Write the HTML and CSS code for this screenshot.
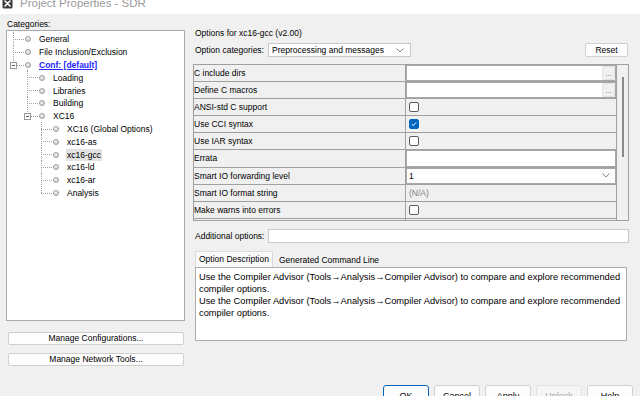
FILE: index.html
```html
<!DOCTYPE html>
<html lang="en">
  <head>
    <meta charset="UTF-8" />
    <title>Project Properties - SDR</title>
    <link rel="stylesheet" href="styles.css">
  </head>
  <body>
    <div class="titlebar">
      <svg class="app-icon" width="11" height="11" viewBox="0 0 11 11">
        <rect x="0.5" y="0.5" width="10" height="10" rx="1.5" fill="#3c3c3c" />
        <path d="M3 3L8 8M8 3L3 8" stroke="#ffffff" stroke-width="1.6" stroke-linecap="round" />
      </svg>
      <span class="title-text">Project Properties - SDR</span>
    </div>

    <div class="main">
      <div class="side">
        <div class="side-label">Categories:</div>
        <div class="tree-box">
          <ul class="tree">
            <li><div class="row"><span class="dot"></span><span class="label">General</span></div></li>
            <li><div class="row"><span class="dot"></span><span class="label">File Inclusion/Exclusion</span></div></li>
            <li class="open">
              <span class="toggle"></span>
              <div class="row"><span class="dot"></span><span class="label conf">Conf: [default]</span></div>
              <ul>
                <li><div class="row"><span class="dot"></span><span class="label">Loading</span></div></li>
                <li><div class="row"><span class="dot"></span><span class="label">Libraries</span></div></li>
                <li><div class="row"><span class="dot"></span><span class="label">Building</span></div></li>
                <li class="open">
                  <span class="toggle"></span>
                  <div class="row"><span class="dot"></span><span class="label">XC16</span></div>
                  <ul>
                    <li><div class="row"><span class="dot"></span><span class="label">XC16 (Global Options)</span></div></li>
                    <li><div class="row"><span class="dot"></span><span class="label">xc16-as</span></div></li>
                    <li><div class="row"><span class="dot"></span><span class="label selected">xc16-gcc</span></div></li>
                    <li><div class="row"><span class="dot"></span><span class="label">xc16-ld</span></div></li>
                    <li><div class="row"><span class="dot"></span><span class="label">xc16-ar</span></div></li>
                    <li><div class="row"><span class="dot"></span><span class="label">Analysis</span></div></li>
                  </ul>
                </li>
              </ul>
            </li>
          </ul>
        </div>
        <button class="btn wide">Manage Configurations...</button>
        <button class="btn wide">Manage Network Tools...</button>
      </div>

      <div class="panel">
        <div class="options-title">Options for xc16-gcc (v2.00)</div>
        <div class="cat-row">
          <span class="cat-label">Option categories:</span>
          <div class="select">
            <span>Preprocessing and messages</span>
            <svg width="8" height="5" viewBox="0 0 8 5"><path d="M0.5 0.5L4 4L7.5 0.5" fill="none" stroke="#888" stroke-width="1" /></svg>
          </div>
          <button class="btn reset">Reset</button>
        </div>

        <div class="props">
          <div class="props-grid">
            <div class="prop">
              <div class="prop-name">C include dirs</div>
              <div class="prop-value field"><span class="more">...</span></div>
            </div>
            <div class="prop">
              <div class="prop-name">Define C macros</div>
              <div class="prop-value field"><span class="more">...</span></div>
            </div>
            <div class="prop">
              <div class="prop-name">ANSI-std C support</div>
              <div class="prop-value"><span class="check"></span></div>
            </div>
            <div class="prop">
              <div class="prop-name">Use CCI syntax</div>
              <div class="prop-value">
                <span class="check checked">
                  <svg width="8" height="8" viewBox="0 0 8 8"><path d="M1.8 4.2L3.3 5.6L6.2 2.4" fill="none" stroke="#fff" stroke-width="1" /></svg>
                </span>
              </div>
            </div>
            <div class="prop">
              <div class="prop-name">Use IAR syntax</div>
              <div class="prop-value"><span class="check"></span></div>
            </div>
            <div class="prop">
              <div class="prop-name">Errata</div>
              <div class="prop-value field"></div>
            </div>
            <div class="prop">
              <div class="prop-name">Smart IO forwarding level</div>
              <div class="prop-value field combo">
                <span>1</span>
                <svg width="8" height="5" viewBox="0 0 8 5"><path d="M0.5 0.5L4 4L7.5 0.5" fill="none" stroke="#888" stroke-width="1" /></svg>
              </div>
            </div>
            <div class="prop">
              <div class="prop-name">Smart IO format string</div>
              <div class="prop-value na">(N/A)</div>
            </div>
            <div class="prop">
              <div class="prop-name">Make warns into errors</div>
              <div class="prop-value"><span class="check"></span></div>
            </div>
            <div class="prop">
              <div class="prop-name"></div>
              <div class="prop-value"></div>
            </div>
          </div>
          <div class="vscroll"><div class="thumb"></div></div>
        </div>

        <div class="extra-row">
          <span class="cat-label">Additional options:</span>
          <div class="text-input"></div>
        </div>

        <div class="tabs">
          <span class="tab active">Option Description</span>
          <span class="tab">Generated Command Line</span>
        </div>
        <div class="desc">
          <p>Use the Compiler Advisor (Tools&rarr;Analysis&rarr;Compiler Advisor) to compare and explore recommended compiler options.</p>
          <p>Use the Compiler Advisor (Tools&rarr;Analysis&rarr;Compiler Advisor) to compare and explore recommended compiler options.</p>
        </div>
      </div>
    </div>

    <div class="footer">
      <button class="btn action default">OK</button>
      <button class="btn action">Cancel</button>
      <button class="btn action">Apply</button>
      <button class="btn action" disabled>Unlock</button>
      <button class="btn action">Help</button>
    </div>
  </body>
</html>
```

FILE: styles.css
```css
* {
  box-sizing: border-box;
}

body {
  margin: 0;
  width: 640px;
  height: 396px;
  overflow: hidden;
  display: flex;
  flex-direction: column;
  background-color: #f0f0f0;
  font-family: "Liberation Sans", Arial, sans-serif;
  font-size: 8.5px;
  color: #000;
}

.titlebar {
  height: 14px;
  flex: none;
  display: flex;
  align-items: flex-start;
  gap: 7px;
  padding-left: 2px;
  background: #fff;
  overflow: hidden;
}

.app-icon {
  margin-top: -2px;
}

.title-text {
  margin-top: -4px;
  font-size: 11.5px;
  line-height: 14px;
  color: #9a9a9a;
}

.main {
  flex: 1;
  display: flex;
  min-height: 0;
}

/* left column */

.side {
  width: 186px;
  flex: none;
  padding-left: 6px;
  display: flex;
  flex-direction: column;
}

.side-label {
  margin-top: 4px;
  line-height: 12px;
  padding-left: 1px;
}

.tree-box {
  height: 291px;
  width: 179px;
  background: #fff;
  border: 1px solid #a9a9a9;
  padding-top: 2px;
}

.tree,
.tree ul {
  list-style: none;
  margin: 0;
  padding: 0;
}

.tree ul {
  margin-left: 14px;
}

.tree li {
  position: relative;
}

.tree li::before {
  content: "";
  position: absolute;
  left: 6px;
  top: 6px;
  width: 11px;
  border-top: 1px dotted #a0a0a0;
}

.tree li::after {
  content: "";
  position: absolute;
  left: 6px;
  top: -1px;
  bottom: 0;
  border-left: 1px dotted #a0a0a0;
}

.tree li:last-child::after {
  bottom: auto;
  height: 7px;
}

.toggle {
  position: absolute;
  left: 3px;
  top: 3px;
  width: 7px;
  height: 7px;
  border: 1px solid #9a9a9a;
  background: #fff;
  z-index: 1;
}

.toggle::after {
  content: "";
  position: absolute;
  left: 1px;
  top: 2px;
  width: 3px;
  border-top: 1px solid #555;
}

.row {
  display: flex;
  align-items: center;
  height: 12.8px;
  padding-left: 18px;
}

.dot {
  width: 6px;
  height: 6px;
  border-radius: 50%;
  border: 1px solid #9c9c9c;
  background: radial-gradient(circle at 40% 35%, #f4f4f4, #c4c4c4);
  margin-right: 8px;
  flex: none;
}

.label {
  line-height: 12px;
  white-space: nowrap;
  padding: 0 1px;
  margin-left: -1px;
}

.label.conf {
  color: #2323ff;
  font-weight: bold;
  text-decoration: underline;
}

.label.selected {
  background: #e3e3e3;
}

.btn {
  font-family: inherit;
  font-size: 8.5px;
  color: #000;
  background: #fdfdfd;
  border: 1px solid #d0d0d0;
  border-radius: 2px;
  padding: 0;
  line-height: 11px;
}

.btn.wide {
  width: 176px;
  height: 13px;
  margin-left: 2px;
  margin-top: 11px;
}

.btn.wide + .btn.wide {
  margin-top: 8px;
}

/* right panel */

.panel {
  width: 436px;
  margin-left: 7px;
  display: flex;
  flex-direction: column;
}

.options-title {
  margin-top: 13px;
  line-height: 12px;
  padding-left: 2px;
}

.cat-row,
.extra-row {
  display: flex;
  align-items: center;
  height: 14px;
  margin-top: 4px;
}

.cat-label {
  width: 75px;
  padding-left: 2px;
  flex: none;
  white-space: nowrap;
}

.select {
  width: 143px;
  height: 14px;
  background: #fdfdfd;
  border: 1px solid #c8c8c8;
  display: flex;
  align-items: center;
  justify-content: space-between;
  padding: 0 6px 0 3px;
}

.btn.reset {
  margin-left: auto;
  margin-right: 1px;
  width: 43px;
  height: 14px;
}

.props {
  margin-top: 7px;
  height: 157px;
  border: 1px solid #a0a0a0;
  display: flex;
  overflow: hidden;
}

.props-grid {
  flex: 1;
  min-width: 0;
}

.prop {
  display: grid;
  grid-template-columns: 212px 1fr;
  height: 17.1px;
  border-bottom: 1px solid #a0a0a0;
}

.prop-name {
  padding-left: 0;
  line-height: 16px;
  border-right: 1px solid #a0a0a0;
  white-space: nowrap;
}

.prop-value {
  display: flex;
  align-items: center;
  padding-left: 3px;
}

.prop-value.field {
  background: #fff;
  box-shadow: inset 0 0 0 1px #a8a8a8;
  justify-content: flex-end;
  padding-right: 1px;
}

.prop-value.combo {
  justify-content: space-between;
  padding-right: 6px;
  background: #fcfcfc;
}

.prop-value.na {
  color: #808080;
}

.more {
  width: 13px;
  height: 14px;
  background: #f0f0f0;
  border: 1px solid #e2e2e2;
  border-radius: 2px;
  font-size: 8px;
  line-height: 14px;
  color: #777;
  text-align: center;
}

.check {
  width: 10px;
  height: 10px;
  border: 1px solid #5c5c5c;
  border-radius: 2px;
  background: #fff;
  display: flex;
  align-items: center;
  justify-content: center;
}

.check.checked {
  background: #0067c0;
  border-color: #0067c0;
}

.vscroll {
  width: 12px;
  flex: none;
  border-left: 1px solid #a0a0a0;
  background: #f0f0f0;
  padding-top: 12px;
}

.thumb {
  width: 2px;
  height: 80px;
  margin-left: 5px;
  background: #8a8a8a;
}

.extra-row {
  margin-top: 8px;
}

.text-input {
  flex: 1;
  height: 14px;
  background: #fff;
  border: 1px solid #c9c9c9;
}

.tabs {
  margin-top: 8px;
  margin-left: 2px;
  display: flex;
  align-items: flex-end;
  height: 16px;
}

.tab {
  height: 15px;
  line-height: 14px;
  padding: 0 3px;
  border: 1px solid transparent;
  border-bottom: none;
}

.tab.active {
  height: 16px;
  background: #f9f9f9;
  border-color: #dadada;
  margin-right: 2px;
}

.desc {
  width: 432px;
  height: 74px;
  margin-left: 2px;
  background: #fff;
  border: 1px solid #adadad;
  padding: 3px 2px 3px 3px;
  font-size: 9.3px;
  line-height: 12px;
  color: #000;
}

.desc p {
  margin: 0;
}

/* dialog buttons */

.footer {
  height: 11px;
  flex: none;
  display: flex;
  justify-content: flex-end;
  gap: 5px;
  padding-right: 7px;
  overflow: hidden;
}

.btn.action {
  width: 46px;
  height: 21px;
  border-radius: 3px;
  line-height: 12px;
  display: block;
  text-align: center;
  font-size: 9px;
}

.btn.action.default {
  border: 1px solid #0067c0;
  box-shadow: inset 0 0 0 1px #fdfdfd;
}

.btn.action:disabled {
  color: #a3a3a3;
  background: #f5f5f5;
  border-color: #e2e2e2;
}
```
